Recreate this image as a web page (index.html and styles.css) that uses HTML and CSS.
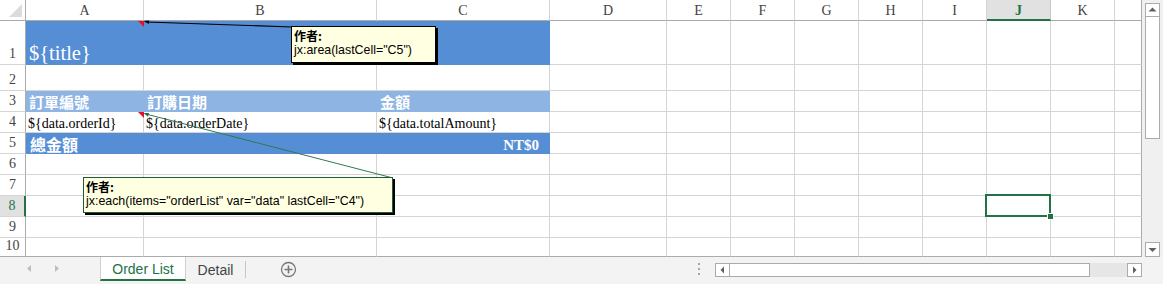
FILE: index.html
```html
<!DOCTYPE html>
<html lang="zh-Hant">
<head>
<meta charset="utf-8">
<title>Order List</title>
<link rel="stylesheet" href="styles.css">
</head>
<body>
<div class="app">
  <div class="sheet">
    <div class="grid">
      <!-- header row -->
      <div class="corner"><svg width="26" height="21" viewBox="0 0 26 21"><polygon points="9,17 22,17 22,4" fill="#dcdcdc"/></svg></div>
      <div class="ch">A</div><div class="ch">B</div><div class="ch">C</div><div class="ch">D</div>
      <div class="ch">E</div><div class="ch">F</div><div class="ch">G</div><div class="ch">H</div>
      <div class="ch">I</div><div class="ch sel">J</div><div class="ch">K</div><div class="ch last"></div>
      <!-- row 1 -->
      <div class="rh">1</div>
      <div class="c dark title note">${title}</div><div class="c dark"></div><div class="c dark"></div>
      <div class="c"></div><div class="c"></div><div class="c"></div><div class="c"></div><div class="c"></div>
      <div class="c"></div><div class="c"></div><div class="c"></div><div class="c last"></div>
      <!-- row 2 -->
      <div class="rh">2</div>
      <div class="c"></div><div class="c"></div><div class="c"></div><div class="c"></div><div class="c"></div><div class="c"></div>
      <div class="c"></div><div class="c"></div><div class="c"></div><div class="c"></div><div class="c"></div><div class="c last"></div>
      <!-- row 3 -->
      <div class="rh">3</div>
      <div class="c light head">訂單編號</div><div class="c light head">訂購日期</div><div class="c light head">金額</div>
      <div class="c"></div><div class="c"></div><div class="c"></div><div class="c"></div><div class="c"></div>
      <div class="c"></div><div class="c"></div><div class="c"></div><div class="c last"></div>
      <!-- row 4 -->
      <div class="rh">4</div>
      <div class="c data note">${data.orderId}</div><div class="c data">${data.orderDate}</div><div class="c data">${data.totalAmount}</div>
      <div class="c"></div><div class="c"></div><div class="c"></div><div class="c"></div><div class="c"></div>
      <div class="c"></div><div class="c"></div><div class="c"></div><div class="c last"></div>
      <!-- row 5 -->
      <div class="rh">5</div>
      <div class="c dark head low">總金額</div><div class="c dark"></div><div class="c dark total">NT$0</div>
      <div class="c"></div><div class="c"></div><div class="c"></div><div class="c"></div><div class="c"></div>
      <div class="c"></div><div class="c"></div><div class="c"></div><div class="c last"></div>
      <!-- row 6 -->
      <div class="rh">6</div>
      <div class="c"></div><div class="c"></div><div class="c"></div><div class="c"></div><div class="c"></div><div class="c"></div>
      <div class="c"></div><div class="c"></div><div class="c"></div><div class="c"></div><div class="c"></div><div class="c last"></div>
      <!-- row 7 -->
      <div class="rh">7</div>
      <div class="c"></div><div class="c"></div><div class="c"></div><div class="c"></div><div class="c"></div><div class="c"></div>
      <div class="c"></div><div class="c"></div><div class="c"></div><div class="c"></div><div class="c"></div><div class="c last"></div>
      <!-- row 8 -->
      <div class="rh sel">8</div>
      <div class="c"></div><div class="c"></div><div class="c"></div><div class="c"></div><div class="c"></div><div class="c"></div>
      <div class="c"></div><div class="c"></div><div class="c"></div><div class="c active"></div><div class="c"></div><div class="c last"></div>
      <!-- row 9 -->
      <div class="rh">9</div>
      <div class="c"></div><div class="c"></div><div class="c"></div><div class="c"></div><div class="c"></div><div class="c"></div>
      <div class="c"></div><div class="c"></div><div class="c"></div><div class="c"></div><div class="c"></div><div class="c last"></div>
      <!-- row 10 -->
      <div class="rh bottom">10</div>
      <div class="c bottom"></div><div class="c bottom"></div><div class="c bottom"></div><div class="c bottom"></div><div class="c bottom"></div><div class="c bottom"></div>
      <div class="c bottom"></div><div class="c bottom"></div><div class="c bottom"></div><div class="c bottom"></div><div class="c bottom"></div><div class="c bottom last"></div>
    </div>
    <div class="vscroll">
      <div class="vbtn"><svg width="13" height="12" viewBox="0 0 13 12"><polygon points="2.5,7.5 10.5,7.5 6.5,3.5" fill="#606060"/></svg></div>
      <div class="vthumb"></div>
      <div class="vtrack"></div>
      <div class="vbtn"><svg width="13" height="13" viewBox="0 0 13 13"><polygon points="2.5,5 10.5,5 6.5,9" fill="#606060"/></svg></div>
    </div>
  </div>

  <div class="tabsbar">
    <div class="nav">
      <svg class="navarrow" width="6" height="8" viewBox="0 0 6 8"><polygon points="5,0 5,7 1,3.5" fill="#bdbdbd"/></svg>
      <svg class="navarrow" width="6" height="8" viewBox="0 0 6 8"><polygon points="1,0 1,7 5,3.5" fill="#bdbdbd"/></svg>
    </div>
    <div class="tab active">Order List</div>
    <div class="tab">Detail</div>
    <div class="sep"></div>
    <svg class="plus" width="17" height="17" viewBox="0 0 17 17"><circle cx="8.5" cy="8.5" r="7" fill="none" stroke="#777" stroke-width="1.3"/><path d="M8.5 4.5v8M4.5 8.5h8" stroke="#777" stroke-width="1.6"/></svg>
    <div class="spacer"></div>
    <div class="splitter"><span></span><span></span><span></span></div>
    <div class="hscroll">
      <div class="hbtn"><svg width="13" height="12" viewBox="0 0 13 12"><polygon points="8,2.5 8,9.5 4.5,6" fill="#606060"/></svg></div>
      <div class="hthumb"></div>
      <div class="htrack"></div>
      <div class="hbtn"><svg width="13" height="12" viewBox="0 0 13 12"><polygon points="5,2.5 5,9.5 8.5,6" fill="#606060"/></svg></div>
    </div>
  </div>

  <svg class="connectors" width="1163" height="284" viewBox="0 0 1163 284">
    <line x1="146" y1="22" x2="292" y2="27" stroke="#000" stroke-width="1.2"/>
    <polygon points="143.5,21 149,20.5 149,24" fill="#000"/>
    <line x1="146" y1="114" x2="393" y2="178" stroke="#2f7a4f" stroke-width="1"/>
    <polygon points="143.5,113 149,113 148,116.8" fill="#217346"/>
  </svg>

  <div class="comment c1">
    <div class="author">作者:</div>
    <div>jx:area(lastCell="C5")</div>
  </div>
  <div class="comment c2">
    <div class="author">作者:</div>
    <div>jx:each(items="orderList" var="data" lastCell="C4")</div>
  </div>
</div>
</body>
</html>
```

FILE: styles.css
```css
html, body {
  margin: 0;
  padding: 0;
  background: #fff;
  overflow: hidden;
}

.app {
  position: relative;
  width: 1163px;
  height: 284px;
  font-family: "Liberation Serif", "Noto Sans CJK TC", serif;
  color: #000;
}

.sheet {
  display: flex;
  height: 257px;
}

.grid {
  display: grid;
  grid-template-columns: 26px 118px 233px 173px 117px repeat(7, 64px) 27px;
  grid-template-rows: 21px 44px 26px repeat(7, 21px) 19px;
  width: 1142px;
  overflow: hidden;
}

.grid > div {
  box-sizing: border-box;
  min-width: 0;
  border-right: 1px solid #d4d4d4;
  border-bottom: 1px solid #d4d4d4;
  white-space: nowrap;
}

.grid > .corner {
  border-right-color: #ababab;
  border-bottom-color: #ababab;
}
.corner svg { display: block; }

.grid > .ch {
  border-bottom-color: #ababab;
  text-align: center;
  font-size: 14px;
  line-height: 21px;
  color: #444;
}
.grid > .ch.sel {
  background: #e1e1e1;
  color: #217346;
  font-weight: bold;
  border-bottom: 2px solid #217346;
  border-right-color: #c6c6c6;
}

.grid > .rh {
  border-right-color: #ababab;
  display: flex;
  align-items: flex-end;
  justify-content: center;
  font-size: 14px;
  line-height: 18px;
  color: #444;
  padding-bottom: 1px;
}
.grid > .rh.sel {
  background: #e1e1e1;
  color: #217346;
  border-right: 2px solid #217346;
}

.grid > .last { border-right-color: #ababab; }
.grid > .bottom { border-bottom-color: #ababab; }

.grid > .c {
  display: flex;
  align-items: flex-end;
  padding: 0 2px 0 2px;
  overflow: visible;
}

.grid > .dark { background: #558ed5; border-color: #558ed5; }
.grid > .light { background: #8db4e2; border-color: #8db4e2; }

.grid > .title {
  color: #fff;
  font-size: 20.5px;
  line-height: 21px;
  padding-left: 3px;
  padding-bottom: 0;
}

.grid > .head {
  color: #fff;
  font-family: "Noto Sans CJK TC", sans-serif;
  font-weight: bold;
  font-size: 15px;
  line-height: 19px;
  padding-left: 3px;
}
.grid > .head.low {
  font-size: 16px;
  line-height: 17px;
  padding-left: 4px;
}

.grid > .data {
  font-size: 14px;
  line-height: 16px;
}

.grid > .total {
  justify-content: flex-end;
  color: #fff;
  font-weight: bold;
  font-size: 15px;
  line-height: 16px;
  padding-right: 10px;
}

.grid > .note { position: relative; }
.grid > .note::after {
  content: "";
  position: absolute;
  top: 0;
  right: -1px;
  border-top: 6px solid #e81123;
  border-left: 6px solid transparent;
}

.grid > .active { position: relative; }
.grid > .active::before {
  content: "";
  position: absolute;
  left: -2px;
  top: -2px;
  right: -1px;
  bottom: -1px;
  border: 2px solid #217346;
}
.grid > .active::after {
  content: "";
  position: absolute;
  right: -4px;
  bottom: -4px;
  width: 5px;
  height: 5px;
  background: #217346;
  border: 1px solid #fff;
}

/* vertical scrollbar */
.vscroll {
  width: 21px;
  background: #f0f0f0;
  box-sizing: border-box;
  padding: 3px 3px 0 3px;
  display: flex;
  flex-direction: column;
}
.vbtn {
  height: 14px;
  border: 1px solid #ababab;
  background: #fff;
  box-sizing: border-box;
  display: flex;
  align-items: center;
  justify-content: center;
}
.vbtn:last-child { height: 15px; }
.vbtn svg { display: block; }
.vthumb {
  height: 122px;
  border: 1px solid #ababab;
  border-top: 0;
  background: #fff;
  box-sizing: border-box;
}
.vtrack { flex: 1; background: #f0f0f0; }

/* sheet tabs bar */
.tabsbar {
  display: flex;
  height: 27px;
  background: #f3f3f3;
  font-family: "Liberation Sans", sans-serif;
}
.nav {
  width: 100px;
  display: flex;
  align-items: center;
  padding-left: 26px;
  box-sizing: border-box;
  gap: 22px;
  margin-top: -3px;
}
.navarrow { display: block; }

.tab {
  height: 24px;
  box-sizing: border-box;
  display: flex;
  align-items: center;
  justify-content: center;
  font-size: 14px;
  color: #444;
  padding-top: 1px;
}
.tab.active {
  width: 86px;
  background: #fff;
  color: #217346;
  border-left: 1px solid #d0d0d0;
  border-right: 1px solid #d0d0d0;
  border-bottom: 2px solid #217346;
  height: 24px;
}
.tab:not(.active) {
  width: 59px;
}
.sep {
  width: 1px;
  height: 17px;
  margin-top: 4px;
  background: #c6c6c6;
}
.plus {
  display: block;
  margin-left: 34px;
  margin-top: 4px;
}
.spacer { flex: 1; }

.splitter {
  display: flex;
  flex-direction: column;
  gap: 3px;
  padding-top: 6px;
  margin-right: 15px;
}
.splitter span {
  display: block;
  width: 2px;
  height: 2px;
  background: #a6a6a6;
}

.hscroll {
  width: 427px;
  height: 14px;
  margin-top: 6px;
  margin-right: 21px;
  display: flex;
}
.hbtn {
  width: 15px;
  border: 1px solid #ababab;
  background: #fff;
  box-sizing: border-box;
  display: flex;
  align-items: center;
  justify-content: center;
}
.hbtn svg { display: block; }
.hthumb {
  width: 360px;
  border: 1px solid #ababab;
  border-left: 0;
  background: #fff;
  box-sizing: border-box;
}
.htrack { flex: 1; background: #e6e6e6; }

/* comments overlay */
.connectors {
  position: absolute;
  left: 0;
  top: 0;
  pointer-events: none;
}

.comment {
  position: absolute;
  box-sizing: border-box;
  background: #ffffe1;
  border: 1px solid #000;
  box-shadow: 2px 2px 0 #000;
  font-family: "Liberation Sans", "Noto Sans CJK TC", sans-serif;
  font-size: 12.4px;
  line-height: 15px;
  padding: 1px 2px;
  color: #000;
  white-space: nowrap;
}
.comment .author {
  font-weight: bold;
  font-family: "Noto Sans CJK TC", sans-serif;
  font-size: 12px;
  line-height: 15px;
}
.c1 {
  left: 291px;
  top: 26px;
  width: 145px;
  height: 37px;
}
.c2 {
  left: 83px;
  top: 177px;
  width: 310px;
  height: 36px;
  border-color: #1e5c38;
}
```
